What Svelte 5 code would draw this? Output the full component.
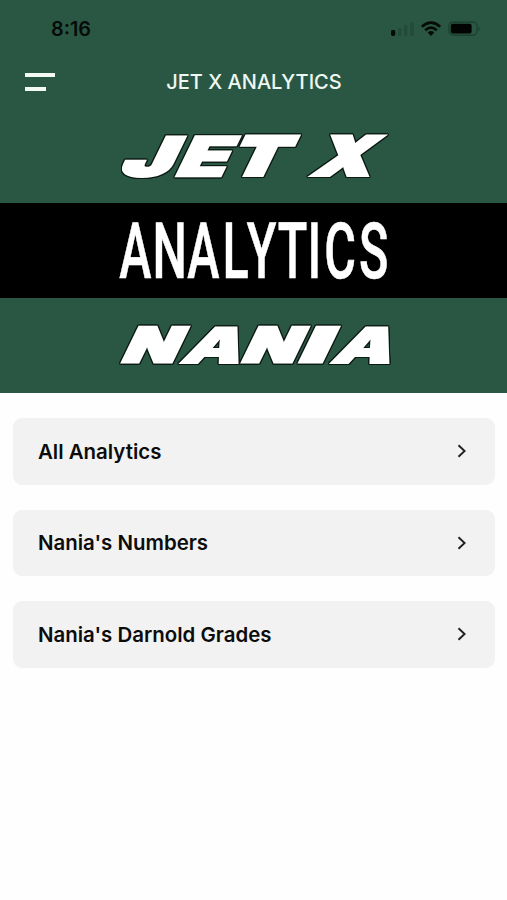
<script>
  const items = ['All Analytics', "Nania's Numbers", "Nania's Darnold Grades"];
  // Each wordmark letter: character, baseline x, horizontal stretch, stroke, size
  const jet = [
    ['J', 118, 1.6, 3, 53.8],
    ['E', 173, 1.52, 2.4, 54.4],
    ['T', 226.5, 1.49, 3.8, 53],
    ['X', 311.5, 1.34, 3.8, 53]
  ];
  const nania = [
    ['N', 120, 1.48, 3.2, 47.5],
    ['A', 179, 1.54, 1.8, 48.8],
    ['N', 240, 1.48, 3.2, 47.5],
    ['I', 297, 2, 3.2, 47.5],
    ['A', 329.5, 1.55, 1.8, 48.8]
  ];
</script>

<div class="screen">
  <header>
    <div class="status">
      <span class="time">8:16</span>
      <svg class="indicators" width="92" height="18" viewBox="0 0 92 18" aria-hidden="true">
        <rect x="1" y="10" width="4.2" height="6" rx="1.4" fill="#050b08" />
        <g fill="#224b39">
          <rect x="8" y="8" width="3.4" height="8" rx="1" />
          <rect x="14" y="5" width="3.4" height="11" rx="1" />
          <rect x="20.2" y="2" width="3.4" height="14" rx="1" />
        </g>
        <g fill="none" stroke="#050b08" stroke-width="2.7">
          <path d="M31.8 6.7 Q41 -1.4 50.2 6.7" />
          <path d="M35.2 10.3 Q41 5.1 46.8 10.3" />
        </g>
        <path d="M37.7 12.4 Q41 9.6 44.3 12.4 L41 16 Z" fill="#050b08" />
        <rect x="58.9" y="2.1" width="28.2" height="13" rx="4" fill="none" stroke="#1b3d2e" stroke-width="1.2" />
        <rect x="60.8" y="3.7" width="20.8" height="9.9" rx="2" fill="#020403" />
        <path d="M88.5 6.5 Q91 8.6 88.5 10.8 Z" fill="#1b3d2e" />
      </svg>
    </div>
    <nav>
      <button class="menu" aria-label="Menu"><i></i><i></i></button>
      <h1>JET X ANALYTICS</h1>
    </nav>
  </header>

  <section class="banner">
    <svg width="507" height="84" viewBox="0 0 507 84" role="img" aria-label="JET X">
      {#each jet as [ch, x, sx, weight, size]}
        <g class="outlined">
          <text class="block" transform="translate({x} {58 - weight / 2}) skewX(-26) scale({sx} 1)" font-size={size} stroke-width={weight}>{ch}</text>
        </g>
      {/each}
    </svg>
    <div class="band">
      <svg width="507" height="94" viewBox="0 0 507 94">
        <text class="condensed" transform="translate(119.2 74.5) scale(.63 1)" x="0 53 108 164 202.5 251.5 299 325.5 380.5">ANALYTICS</text>
      </svg>
    </div>
    <svg width="507" height="95" viewBox="0 0 507 95" role="img" aria-label="NANIA">
      {#each nania as [ch, x, sx, weight, size]}
        <g class="outlined">
          <text class="block" transform="translate({x} {66 - weight / 2}) skewX(-26) scale({sx} 1)" font-size={size} stroke-width={weight}>{ch}</text>
        </g>
      {/each}
    </svg>
  </section>

  <main>
    {#each items as item}
      <button class="row">
        <span>{item}</span>
        <svg width="10" height="16" viewBox="0 0 10 16" aria-hidden="true">
          <path d="M1.5 2.2 L7.6 8 L1.5 13.8" fill="none" stroke="#202020" stroke-width="1.9" />
        </svg>
      </button>
    {/each}
  </main>
</div>

<style>
  :global(body) { margin: 0; background: #fefefe; }
  .screen { width: 507px; height: 900px; overflow: hidden; background: #fefefe; font-family: Inter, "Liberation Sans", sans-serif; }
  header { height: 119px; background: #2a5743; }
  .status { height: 57px; box-sizing: border-box; padding: 0 25px 0 51px; display: flex; justify-content: space-between; align-items: center; }
  .time { font-size: 19.8px; font-weight: 600; color: #050b08; }
  nav { height: 49px; display: grid; grid-template-columns: 101px 1fr 100px; align-items: center; }
  .menu { border: 0; background: none; padding: 0 0 0 25px; display: flex; flex-direction: column; gap: 10px; }
  .menu i { display: block; width: 30px; height: 4px; background: #f3faf5; }
  .menu i:last-child { width: 21px; }
  h1 { margin: 0; padding-top: 1px; color: #eef7f1; font-size: 20px; font-weight: 500; text-align: center; white-space: nowrap; }
  .banner { background: #2a5743; height: 274px; }
  .banner svg { display: block; }
  .band { height: 95px; background: #000; }
  .block { font-family: Inter, sans-serif; font-weight: 900; fill: #fff; stroke: #fff; }
  .outlined { filter: drop-shadow(1px 0 0 #0b1a13) drop-shadow(-1px 0 0 #0b1a13) drop-shadow(0 1px 0 #0b1a13) drop-shadow(0 -1px 0 #0b1a13); }
  .condensed { font-family: Roboto, sans-serif; font-size: 77px; font-weight: 500; fill: #fff; stroke: #fff; stroke-width: .6; }
  main { padding: 25px 12px 0 13px; display: flex; flex-direction: column; gap: 25px; }
  .row { height: 66.6px; border: 0; border-radius: 9px; background: #f2f2f2; padding: 0 28px 0 25px; display: flex; align-items: center; justify-content: space-between; font: 600 20.45px Inter, sans-serif; color: #0c0c0c; }
</style>
